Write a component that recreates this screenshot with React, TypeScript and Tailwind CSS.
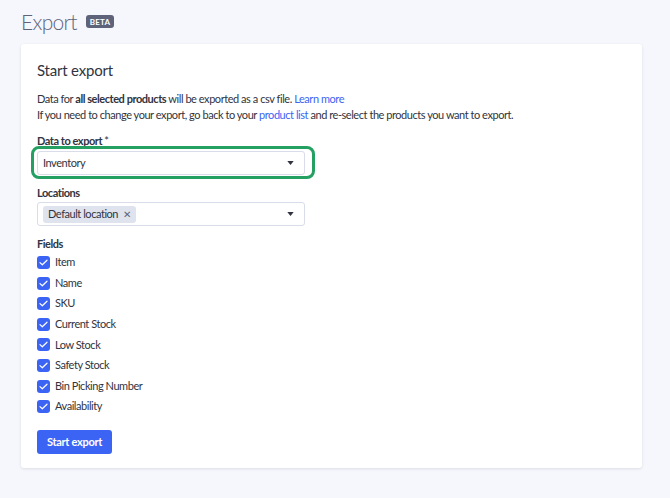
import React from "react";

const fields = [
  "Item",
  "Name",
  "SKU",
  "Current Stock",
  "Low Stock",
  "Safety Stock",
  "Bin Picking Number",
  "Availability",
];

function Caret() {
  return (
    <svg width="7" height="4" viewBox="0 0 8 5" className="text-[#313440]">
      <path d="M0 0h8L4 5z" fill="currentColor" />
    </svg>
  );
}

function Check() {
  return (
    <span className="flex h-[13px] w-[13px] shrink-0 items-center justify-center rounded-[3px] bg-[#3c64f4]">
      <svg width="9" height="7" viewBox="0 0 9 7" fill="none">
        <path d="M1 3.6l2.3 2.2L8 1.2" stroke="white" strokeWidth="1.2" strokeLinecap="round" strokeLinejoin="round" />
      </svg>
    </span>
  );
}

export default function App() {
  return (
    <div
      className="min-h-[498px] w-[670px] bg-[#f5f7fc] px-[21px] pt-[8px] text-[#313440]"
      style={{ fontFamily: "Lato, 'Noto Sans', sans-serif" }}
    >
      <div className="flex h-[26px] items-center gap-[9px]">
        <h1 className="text-[21px] font-light leading-none tracking-[-0.7px] text-[#5e637a]">Export</h1>
        <span className="rounded-[3px] bg-[#5e637a] px-[4px] pb-[2px] pt-[3px] text-[8px] font-bold leading-none tracking-wide text-white">
          BETA
        </span>
      </div>

      <div className="mt-[10px] h-[424px] w-[621px] rounded-[3px] bg-white px-[16px] pt-[16px] tracking-[-0.45px] shadow-[0_1px_3px_rgba(49,52,64,0.12)]">
        <h2 className="text-[15px] leading-[20px] tracking-[-0.2px] text-[#313440]">Start export</h2>

        <div className="mt-[11px] text-[11px] leading-[16px] text-[#313440]">
          <p>
            Data for <b className="font-bold">all selected products</b> will be exported as a csv file.{" "}
            <span className="text-[#3c64f4]">Learn more</span>
          </p>
          <p>
            If you need to change your export, go back to your{" "}
            <span className="text-[#3c64f4]">product list</span> and re-select the products you want to export.
          </p>
        </div>

        <div className="mt-[10px] text-[11px] font-bold leading-[16px]">
          Data to export <span className="font-normal">*</span>
        </div>
        <div className="relative mt-[2px] w-[268px]">
          <div className="flex h-[24px] items-center justify-between rounded-[3px] border border-[#d9dce9] bg-white pl-[5px] pr-[10px] text-[11px]">
            <span>Inventory</span>
            <Caret />
          </div>
          <div className="pointer-events-none absolute -bottom-[4px] -left-[6px] -right-[10px] -top-[5px] rounded-[8px] border-[3px] border-[#23a062]" />
        </div>

        <div className="mt-[10px] text-[11px] font-bold leading-[16px]">Locations</div>
        <div className="mt-[1px] flex h-[24px] w-[268px] items-center justify-between rounded-[3px] border border-[#d9dce9] bg-white pl-[5px] pr-[10px] text-[11px]">
          <span className="flex h-[17px] items-center gap-[5px] rounded-[3px] bg-[#dfe3ee] px-[5px]">
            Default location
            <span className="text-[10px] leading-none text-[#5e637a]">✕</span>
          </span>
          <Caret />
        </div>

        <div className="mt-[10px] text-[11px] font-bold leading-[16px]">Fields</div>
        <div className="mt-[4px] flex flex-col gap-[7.6px]">
          {fields.map((f) => (
            <label key={f} className="flex h-[13px] items-center gap-[5px] text-[11px] text-[#313440]">
              <Check />
              <span>{f}</span>
            </label>
          ))}
        </div>

        <button className="mt-[17px] h-[24px] rounded-[3px] bg-[#3c64f4] px-[10px] text-[11px] font-bold tracking-[-0.3px] text-white">
          Start export
        </button>
      </div>
    </div>
  );
}
